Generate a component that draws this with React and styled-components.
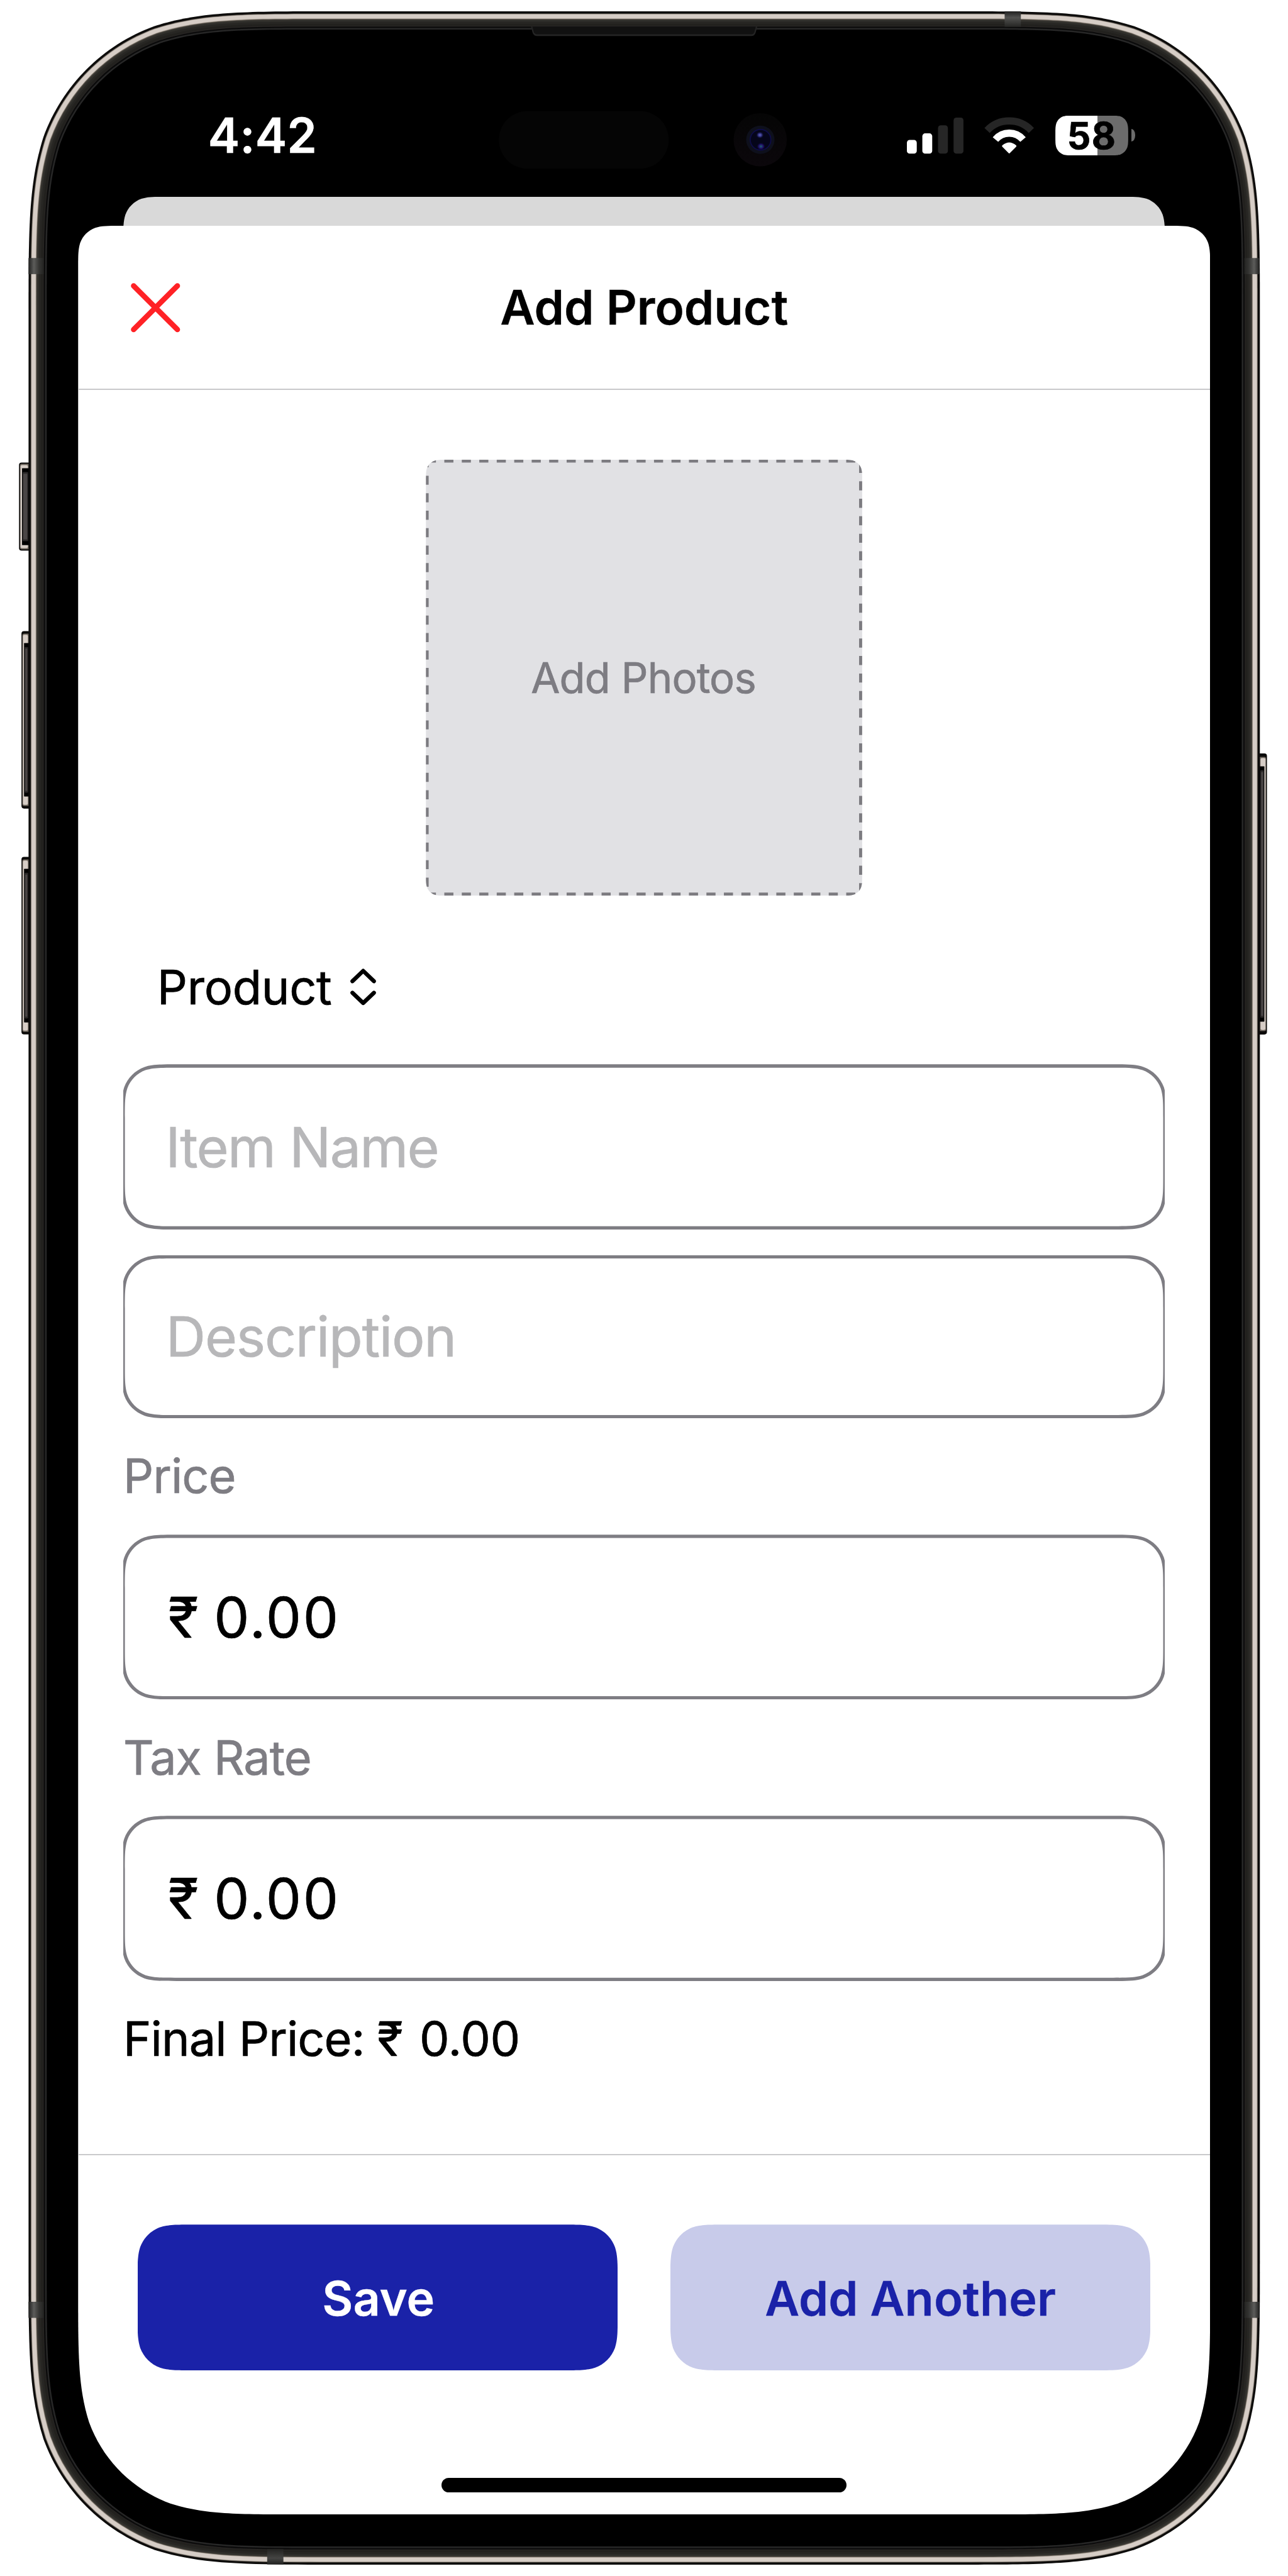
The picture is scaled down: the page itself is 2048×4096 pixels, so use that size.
import React from "react";
import styled, { createGlobalStyle, css } from "styled-components";

/* Design units: the artboard is 3000 units wide and is laid out in a 2048px page. */
const K = 2048 / 3000;
const u = (n) => `${+(n * K).toFixed(2)}px`;

/* Continuous-curvature rounded rectangle, with one radius for the top corners and one for the bottom. */
function smoothRect(x, y, w, h, rt, rb = rt, k = 1) {
  const p = (px, py) => `${+(px * k).toFixed(2)} ${+(py * k).toFixed(2)}`;
  const corner = (cx, cy, sx, sy, r, flip) => {
    const pts = [
      [1.528665, 0], [1.088493, 0], [0.868407, 0], [0.631494, 0.074911],
      [0.372824, 0.169059], [0.169059, 0.372824], [0.074911, 0.631494],
      [0, 0.868407], [0, 1.088493], [0, 1.528665],
    ];
    const q = (flip ? pts.slice().reverse() : pts).map(([a, b]) => p(cx + sx * a * r, cy + sy * b * r));
    return `L${q[0]}C${q[1]} ${q[2]} ${q[3]}C${q[4]} ${q[5]} ${q[6]}C${q[7]} ${q[8]} ${q[9]}`;
  };
  return (
    `M${p(x + w / 2, y)}` +
    corner(x + w, y, -1, 1, rt, false) +
    corner(x + w, y + h, -1, -1, rb, true) +
    corner(x, y + h, 1, -1, rb, false) +
    corner(x, y, 1, 1, rt, true) +
    "Z"
  );
}

const GlobalStyle = createGlobalStyle`
  html, body { margin: 0; padding: 0; background: #fff; }
  * { box-sizing: border-box; }
`;

const Page = styled.div`
  position: relative;
  width: 2048px;
  height: 4096px;
  padding: ${u(142)} ${u(181.3)} 0 ${u(182)};
  background: #fff;
  overflow: hidden;
  font-family: Inter, "Noto Sans", "Liberation Sans", sans-serif;
  font-size: ${u(110.7)};
  font-weight: 400;
  -webkit-text-stroke: 0.7px currentColor;
  color: #000;
`;

const FrameArt = styled.svg`
  position: absolute;
  inset: 0;
  width: 2048px;
  height: 4096px;
`;

const Screen = styled.main`
  position: relative;
  display: flex;
  flex-direction: column;
  height: ${u(5714.6)};
`;

const StatusBar = styled.div`
  display: flex;
  align-items: center;
  height: ${u(316)};
  padding: ${u(31)} ${u(175)} 0 ${u(302)};
`;

const Time = styled.span`
  margin-right: auto;
  font-size: ${u(112)};
  font-weight: 600;
  line-height: ${u(140)};
  letter-spacing: ${u(-0.2)};
  -webkit-text-stroke-width: 0.3px;
  color: #fff;
`;

const StatusIcons = styled.div`
  display: flex;
  align-items: center;
  gap: ${u(50.2)};
`;

const Glyph = styled.svg`
  display: block;
  width: ${(p) => u(p.$w)};
  height: ${(p) => u(p.$h)};
  overflow: visible;
`;

const Battery = styled.div`
  display: flex;
  align-items: center;
  gap: ${u(7)};
`;

const BatteryBody = styled.div`
  display: flex;
  align-items: center;
  justify-content: center;
  width: ${u(169.6)};
  height: ${u(93)};
  clip-path: path("${smoothRect(0, 0, 169.6, 93, 29, 29, K)}");
  background: linear-gradient(90deg, #fff 57.6%, #6c6c6c 57.6%);
  font-size: ${u(86)};
  font-weight: 700;
  letter-spacing: ${u(2)};
  line-height: ${u(93)};
  color: #000;
`;

const BatteryTip = styled.span`
  width: ${u(9)};
  height: ${u(29)};
  border-radius: 0 100% 100% 0 / 0 50% 50% 0;
  background: #6c6c6c;
`;

const BackSheet = styled.div`
  height: ${u(68)};
  margin: 0 ${u(105.5)} 0 ${u(105)};
  clip-path: path("${smoothRect(0, 0, 2426.2, 300, 67, 67, K)}");
  background: #d9d9d9;
`;

const Sheet = styled.section`
  display: flex;
  flex: 1;
  flex-direction: column;
  clip-path: path("${smoothRect(0, 0, 2636.7, 5330.6, 63, 340, K)}");
  background: #fff;
`;

const Header = styled.header`
  display: grid;
  grid-template-columns: 1fr auto 1fr;
  align-items: center;
  height: ${u(382)};
  padding: ${u(2)} ${u(122.6)} 0;
  border-bottom: 2px solid #c9c9cb;
`;

const CloseButton = styled.button`
  justify-self: start;
  padding: 0;
  border: 0;
  background: none;
`;

const Title = styled.h1`
  margin: 0;
  padding-bottom: ${u(3)};
  font-size: ${u(111.6)};
  font-weight: 600;
  line-height: ${u(144)};
  -webkit-text-stroke-width: 0.3px;
`;

const Form = styled.div`
  display: flex;
  flex-direction: column;
  flex: 1;
  padding: ${u(163)} ${u(105.5)} 0 ${u(105)};
`;

const PhotoDrop = styled.div`
  position: relative;
  display: flex;
  align-items: center;
  justify-content: center;
  align-self: center;
  width: ${u(1016)};
  height: ${u(1015)};
  padding-right: ${u(3)};
  clip-path: path("${smoothRect(0, 0, 1016, 1015, 31, 31, K)}");
  background: #e1e1e4;
  font-size: ${u(98)};
  letter-spacing: ${u(-1.2)};
  color: #7d7c82;
`;

const DashedOutline = styled.svg`
  position: absolute;
  inset: 0;
  width: 100%;
  height: 100%;
`;

const Picker = styled.div`
  display: flex;
  align-items: center;
  gap: ${u(43)};
  height: ${u(144)};
  margin: ${u(141.5)} 0 ${u(111.5)};
  padding-left: ${u(79)};
  letter-spacing: ${u(-0.4)};
`;

const Fields = styled.div`
  display: flex;
  flex-direction: column;
  gap: ${u(67.2)};
`;

/* The outline straddles the field's edge and is cut off at its left and right sides. */
const STROKE = 7.8;
const outline = (h) => {
  const o = smoothRect(0, 0, 2426.2 + STROKE, h + STROKE, 84, 84, K);
  const i = smoothRect(STROKE, STROKE, 2426.2 - STROKE, h - STROKE, 76.2, 76.2, K);
  return `${o}${i}`;
};

const Field = styled.div`
  position: relative;
  display: flex;
  align-items: center;
  height: ${(p) => u(p.$h)};
  padding-left: ${(p) => u(p.$inset)};
  font-size: ${(p) => u(p.$placeholder ? 128.5 : 130.5)};
  letter-spacing: ${(p) => u(p.$tracking)};
  color: ${(p) => (p.$placeholder ? "#b7b7b9" : "#000")};
  overflow-x: clip;
  overflow-y: visible;

  &::before {
    content: "";
    position: absolute;
    inset: ${u(-STROKE / 2)};
    background: #7e7d83;
    ${(p) => css`clip-path: path(evenodd, "${outline(p.$h)}");`}
  }
`;

const Digits = styled.span`
  margin-left: ${(p) => u(p.$shift || 0)};
  letter-spacing: ${(p) => u(p.$tracking)};
`;

const Label = styled.div`
  height: ${u(144.2)};
  padding-bottom: ${u(1.6)};
  line-height: ${u(142.6)};
  letter-spacing: ${(p) => u(p.$tracking)};
  color: ${(p) => (p.$strong ? "#000" : "#7e7d83")};
`;

const Footer = styled.footer`
  display: flex;
  flex-direction: column;
  align-items: center;
  height: ${u(839.7)};
  padding: ${u(161.8)} ${u(139)} 0 ${u(138.3)};
  border-top: 2px solid #c9c9cb;
`;

const Actions = styled.div`
  display: grid;
  grid-template-columns: 1fr 1fr;
  gap: ${u(122.6)};
  align-self: stretch;
`;

const ActionButton = styled.button`
  height: ${u(339.3)};
  padding: ${u(4)} 0 0 ${(p) => u(p.$primary ? 4 : 0)};
  border: 0;
  clip-path: path("${smoothRect(0, 0, 1118.3, 339.3, 83, 83, K)}");
  background: ${(p) => (p.$primary ? "#1a22a8" : "#c8cbea")};
  color: ${(p) => (p.$primary ? "#fff" : "#1a22a8")};
  font: inherit;
  font-weight: 600;
  letter-spacing: ${u(0.1)};
  -webkit-text-stroke-width: 0.3px;
`;

const HomeIndicator = styled.div`
  width: ${u(943)};
  height: ${u(34)};
  margin-top: ${u(250.5)};
  border-radius: ${u(17)};
  background: #000;
`;

/* Rings of the phone body, from the outside in: inset and colour. */
const RINGS = [
  [0, "#0d0c0b"], [5, "#5d564f"], [6, "#a29a91"], [7, "#d6cdc6"], [16.5, "#aba298"],
  [17.5, "#645d54"], [18.5, "#3c3a35"], [20.5, "#302f2b"], [24, "#272623"],
  [29, "#22211e"], [34, "#2a2726"], [35.3, "#0b0b0b"], [38.6, "#272727"], [42.3, "#000"],
];

const BANDS_V = [[66.5, 601], [2898, 601], [66.5, 5361.3], [2898, 5361.3]];
const BANDS_H = [[2340, 26.5], [622.3, 5937]];

/* rim: where the bright rim starts; cap: its height at the ends; shade: where the grey face starts. */
function SideKey({ x, y, w, h, rim, cap, shade, side, flip }) {
  const t = flip ? `translate(${x + w} 0) scale(-1 1)` : `translate(${x} 0)`;
  const face = rim + side + 3;
  return (
    <g transform={t}>
      <rect x="0" y={y} width={w + 6} height={h} rx="6" fill="#0b0a09" />
      <rect x="2.200" y={y + cap - 3} width={w} height={h - 2 * cap + 6} rx="4" fill="#6f675f" />
      <rect x={rim} y={y + cap - 1} width={w - rim - 1.5} height={h - 2 * cap + 2} rx="3.500" fill="#978e85" />
      <rect x={rim + 0.7} y={y + cap} width={w - rim - 3} height={h - 2 * cap} rx="3" fill="#d6cdc6" />
      <rect x={rim + side} y={y + shade - 13} width={w} height={h - 2 * shade + 26} rx="1" fill="#000" />
      <rect x={face - 1.5} y={y + shade - 4} width={w - face} height={h - 2 * shade + 8} rx="2" fill="#2b2828" />
      <rect x={face} y={y + shade} width={w - face - 3.5} height={h - 2 * shade} rx="2" fill="#4a4646" />
    </g>
  );
}

function PhoneFrame() {
  return (
    <FrameArt viewBox="0 0 3000 6000" aria-hidden="true">
      <defs>
        <linearGradient id="bandL" x1="0" x2="1">
          <stop offset="0" stopColor="#20201f" /><stop offset="0.35" stopColor="#5c5c5a" />
          <stop offset="0.7" stopColor="#343432" /><stop offset="1" stopColor="#232321" />
        </linearGradient>
        <linearGradient id="bandR" x1="1" x2="0">
          <stop offset="0" stopColor="#20201f" /><stop offset="0.35" stopColor="#5c5c5a" />
          <stop offset="0.7" stopColor="#343432" /><stop offset="1" stopColor="#232321" />
        </linearGradient>
        <linearGradient id="bandT" x1="0" x2="0" y1="0" y2="1">
          <stop offset="0" stopColor="#20201f" /><stop offset="0.4" stopColor="#525250" />
          <stop offset="1" stopColor="#262624" />
        </linearGradient>
        <linearGradient id="bandB" x1="0" x2="0" y1="1" y2="0">
          <stop offset="0" stopColor="#20201f" /><stop offset="0.4" stopColor="#454543" />
          <stop offset="1" stopColor="#222220" />
        </linearGradient>
        <linearGradient id="lens" x1="0" x2="0" y1="0" y2="1">
          <stop offset="0" stopColor="#050505" /><stop offset="1" stopColor="#0b070b" />
        </linearGradient>
        <radialGradient id="glintTop">
          <stop offset="0" stopColor="#6466bf" /><stop offset="0.5" stopColor="#30307e" />
          <stop offset="1" stopColor="#0a0a30" stopOpacity="0" />
        </radialGradient>
        <radialGradient id="glintLow">
          <stop offset="0" stopColor="#1f6470" /><stop offset="0.55" stopColor="#200d68" />
          <stop offset="1" stopColor="#0a0a30" stopOpacity="0" />
        </radialGradient>
      </defs>

      <SideKey x={44.3} y={1077.5} w={22.7} h={205} rim={3} side={4} cap={6} shade={26} />
      <SideKey x={50} y={1469.8} w={17} h={413.5} rim={3} side={3} cap={9} shade={41} />
      <SideKey x={50} y={1995.8} w={17} h={413.5} rim={3} side={3} cap={9} shade={41} />
      <SideKey x={2934} y={1755} w={17} h={654.5} rim={3} side={3} cap={11} shade={43} flip />

      {RINGS.map(([i, c]) => (
        <path key={i} d={smoothRect(66.5 + i, 26.5 + i, 2868 - 2 * i, 5947 - 2 * i, 463 - i)} fill={c} />
      ))}

      {BANDS_V.map(([x, y]) => (
        <rect key={`${x}-${y}`} x={x} y={y} width="35.500" height="37.500" fill={x < 1500 ? "url(#bandL)" : "url(#bandR)"} />
      ))}
      {BANDS_H.map(([x, y]) => (
        <rect key={x} x={x} y={y} width="37.800" height="36" fill={y < 3000 ? "url(#bandT)" : "url(#bandB)"} />
      ))}

      <path d="M1236.6 62H1764L1760 76Q1757.500 83.700 1750 83.700H1251Q1243 83.700 1240.500 76Z" fill="#242424" />
      <path d="M1240 62H1760.500L1757 75Q1755 80 1749 80H1252Q1246 80 1243.500 75Z" fill="#111" />

      <rect x="1162" y="258.500" width="395.500" height="134.500" rx="67" fill="#050505" />
      <circle cx="1770.700" cy="325.500" r="62" fill="url(#lens)" />
      <circle cx="1771" cy="325.500" r="33" fill="#0e101c" />
      <circle cx="1771.500" cy="325.500" r="24" fill="#05051a" stroke="#0e0c48" strokeWidth="2.500" />
      <ellipse cx="1770" cy="314.500" rx="9" ry="8" fill="url(#glintTop)" />
      <ellipse cx="1772.500" cy="341" rx="10" ry="9" fill="url(#glintLow)" />
    </FrameArt>
  );
}

const SignalIcon = () => (
  <Glyph $w={131.8} $h={84} viewBox="0 0 131.8 84">
    <rect x="0" y="52" width="23" height="32" rx="6.500" fill="#fff" />
    <rect x="36" y="36.800" width="23" height="47.200" rx="6.500" fill="#fff" />
    <rect x="72.500" y="18" width="23" height="66" rx="6.500" fill="#262626" />
    <rect x="108.800" y="0" width="23" height="84" rx="6.500" fill="#262626" />
  </Glyph>
);

const WifiIcon = () => (
  <Glyph $w={113.5} $h={84} viewBox="461 428 178 132" fill="none">
    <path d="M469 475A112 112 0 0 1 631 475" stroke="#262626" strokeWidth="26.500" />
    <path d="M499.500 508.500A66 66 0 0 1 600.500 508.500" stroke="#fff" strokeWidth="26" />
    <path d="M524.500 534.500Q522 532 525 529.500Q550 508.500 575 529.500Q578 532 575.500 534.500L552 558Q550 560 548 558Z" fill="#fff" />
  </Glyph>
);

const CloseIcon = () => (
  <Glyph $w={115} $h={115} viewBox="0 0 115 115" stroke="#ff2226" strokeWidth="12.500" strokeLinecap="round">
    <path d="M6.500 6.500L108.500 108.500M108.500 6.500L6.500 108.500" />
  </Glyph>
);

const ChevronUpDown = () => (
  <Glyph $w={60} $h={86} viewBox="0 0 60 86" fill="none" stroke="#000" strokeWidth="9.500" strokeLinecap="round" strokeLinejoin="round">
    <path d="M5 29.500L30 5.500L55 29.500M5 56.500L30 80.500L55 56.500" />
  </Glyph>
);

function DropOutline() {
  const dash = { stroke: "#7c7b80", strokeWidth: 13.4, strokeDasharray: "21.2 19.5" };
  return (
    <DashedOutline viewBox="0 0 1016 1015" fill="none">
      <path d="M2.500 0H1016" {...dash} />
      <path d="M2.500 1015H1016" {...dash} />
      <path d="M0 -3.500V1015" {...dash} />
      <path d="M1016 9.500V1015" {...dash} />
    </DashedOutline>
  );
}

export default function App() {
  return (
    <>
      <GlobalStyle />
      <Page>
        <PhoneFrame />
        <Screen>
          <StatusBar>
            <Time>4:42</Time>
            <StatusIcons>
              <SignalIcon />
              <WifiIcon />
              <Battery>
                <BatteryBody>58</BatteryBody>
                <BatteryTip />
              </Battery>
            </StatusIcons>
          </StatusBar>
          <BackSheet />
          <Sheet>
            <Header>
              <CloseButton aria-label="Close"><CloseIcon /></CloseButton>
              <Title>Add Product</Title>
            </Header>
            <Form>
              <PhotoDrop>
                <DropOutline />
                Add Photos
              </PhotoDrop>
              <Picker>
                Product
                <ChevronUpDown />
              </Picker>
              <Fields>
                <Field $h={377} $inset={98.5} $tracking={-2.4} $placeholder>Item Name</Field>
                <Field $h={372.6} $inset={99.5} $tracking={-1.8} $placeholder>Description</Field>
                <Label $tracking={-1.4}>Price</Label>
                <Field $h={376.4} $inset={105} $tracking={-0.5}>₹&nbsp;<Digits $tracking={3.9}>0.00</Digits></Field>
                <Label $tracking={-1.5}>Tax Rate</Label>
                <Field $h={377} $inset={105} $tracking={-0.5}>₹&nbsp;<Digits $tracking={3.9}>0.00</Digits></Field>
                <Label $tracking={-1.35} $strong>Final Price: ₹ <Digits $shift={10} $tracking={-0.4}>0.00</Digits></Label>
              </Fields>
            </Form>
            <Footer>
              <Actions>
                <ActionButton $primary>Save</ActionButton>
                <ActionButton>Add Another</ActionButton>
              </Actions>
              <HomeIndicator />
            </Footer>
          </Sheet>
        </Screen>
      </Page>
    </>
  );
}
